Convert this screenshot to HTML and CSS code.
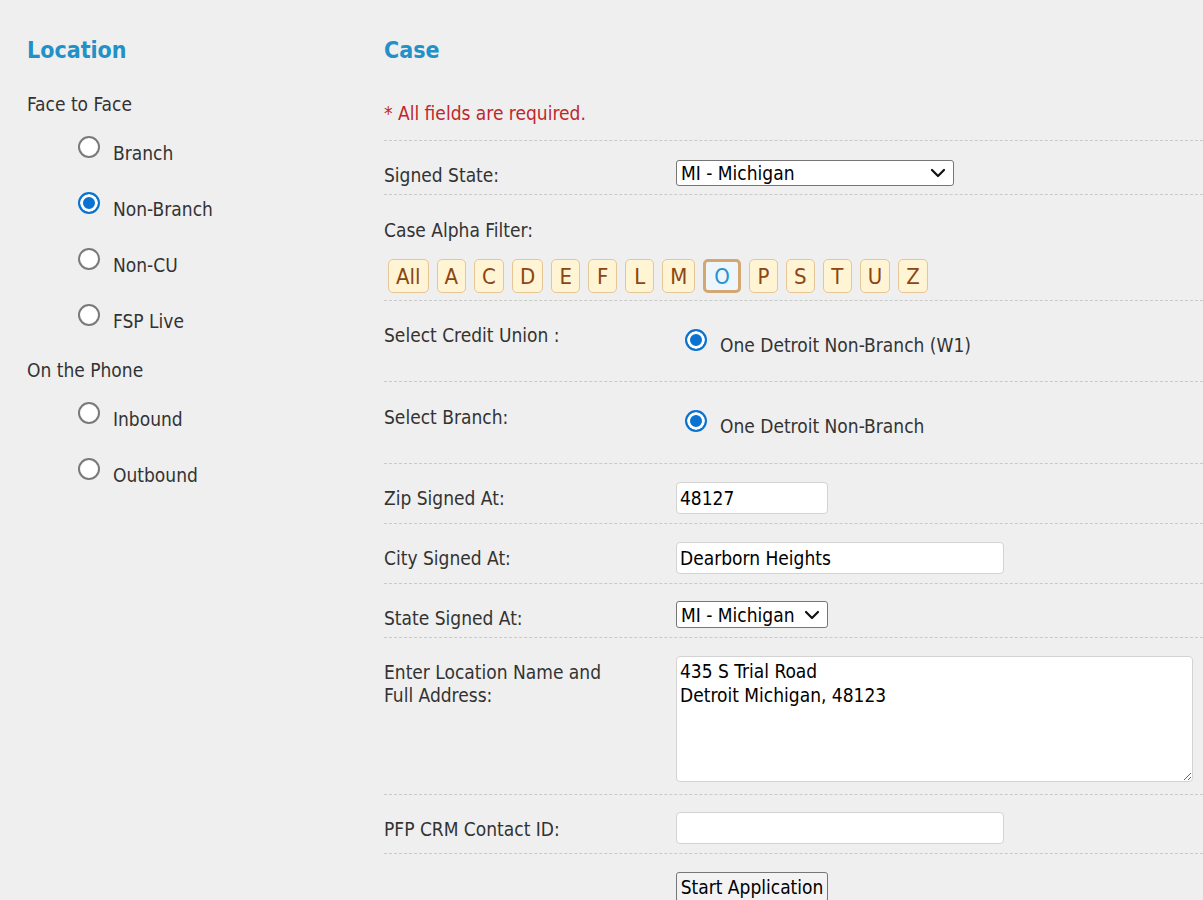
FILE: index.html
```html
<!DOCTYPE html>
<html lang="en">
<head>
<meta charset="utf-8">
<title>Location / Case</title>
<link rel="stylesheet" href="styles.css">
</head>
<body>
<div class="page">
  <section class="loc">
    <h2 class="heading">Location</h2>
    <div class="group">Face to Face</div>
    <label class="opt"><input type="radio" name="loc" class="radio"><span>Branch</span></label>
    <label class="opt"><input type="radio" name="loc" class="radio" checked><span>Non-Branch</span></label>
    <label class="opt"><input type="radio" name="loc" class="radio"><span>Non-CU</span></label>
    <label class="opt"><input type="radio" name="loc" class="radio"><span>FSP Live</span></label>
    <div class="group group-2">On the Phone</div>
    <label class="opt"><input type="radio" name="loc" class="radio"><span>Inbound</span></label>
    <label class="opt"><input type="radio" name="loc" class="radio"><span>Outbound</span></label>
  </section>

  <section class="case">
    <h2 class="heading">Case</h2>
    <div class="row row-req"><span class="req">* All fields are required.</span></div>

    <div class="row row-signed">
      <div class="lbl">Signed State:</div>
      <div class="ctl">
        <div class="selwrap sel-wide">
          <select class="sel"><option>MI - Michigan</option></select>
          <svg class="chev" width="16" height="10" viewBox="0 0 16 10"><path d="M2 2 L8 8 L14 2" fill="none" stroke="#111" stroke-width="2.2" stroke-linecap="round" stroke-linejoin="round"/></svg>
        </div>
      </div>
    </div>

    <div class="row row-alpha">
      <div class="lbl">Case Alpha Filter:</div>
      <div class="alpha">
        <button class="ab">All</button>
        <button class="ab">A</button>
        <button class="ab">C</button>
        <button class="ab">D</button>
        <button class="ab">E</button>
        <button class="ab">F</button>
        <button class="ab">L</button>
        <button class="ab">M</button>
        <button class="ab ab-on">O</button>
        <button class="ab">P</button>
        <button class="ab">S</button>
        <button class="ab">T</button>
        <button class="ab">U</button>
        <button class="ab">Z</button>
      </div>
    </div>

    <div class="row row-cu">
      <div class="lbl">Select Credit Union :</div>
      <div class="ctl ctl-radio"><label class="ropt"><input type="radio" name="cu" class="radio" checked><span>One Detroit Non-Branch (W1)</span></label></div>
    </div>

    <div class="row row-br">
      <div class="lbl">Select Branch:</div>
      <div class="ctl ctl-radio"><label class="ropt"><input type="radio" name="br" class="radio" checked><span>One Detroit Non-Branch</span></label></div>
    </div>

    <div class="row row-zip">
      <div class="lbl">Zip Signed At:</div>
      <div class="ctl"><input type="text" class="txt txt-zip" value="48127"></div>
    </div>

    <div class="row row-city">
      <div class="lbl">City Signed At:</div>
      <div class="ctl"><input type="text" class="txt txt-city" value="Dearborn Heights"></div>
    </div>

    <div class="row row-state">
      <div class="lbl">State Signed At:</div>
      <div class="ctl">
        <div class="selwrap sel-short">
          <select class="sel"><option>MI - Michigan</option></select>
          <svg class="chev" width="16" height="10" viewBox="0 0 16 10"><path d="M2 2 L8 8 L14 2" fill="none" stroke="#111" stroke-width="2.2" stroke-linecap="round" stroke-linejoin="round"/></svg>
        </div>
      </div>
    </div>

    <div class="row row-addr">
      <div class="lbl">Enter Location Name and<br>Full Address:</div>
      <div class="ctl"><textarea class="area">435 S Trial Road
Detroit Michigan, 48123</textarea></div>
    </div>

    <div class="row row-pfp">
      <div class="lbl">PFP CRM Contact ID:</div>
      <div class="ctl"><input type="text" class="txt txt-city" value=""></div>
    </div>

    <div class="row-btn">
      <button class="start">Start Application</button>
    </div>
  </section>
</div>
</body>
</html>
```

FILE: styles.css
```css
* { box-sizing: border-box; }

html, body {
  margin: 0;
  padding: 0;
  background: #efefef;
}

body {
  font-family: "DejaVu Sans Condensed", "DejaVu Sans", "Liberation Sans", sans-serif;
  font-size: 19px;
  color: #333;
  overflow: hidden;
}

.page {
  display: flex;
  align-items: flex-start;
}

.heading {
  margin: 37px 0 0;
  font-size: 23px;
  line-height: 26px;
  font-weight: bold;
  color: #2191c8;
}

/* left column */
.loc {
  width: 384px;
  padding-left: 27px;
  flex: none;
}

.group {
  margin-top: 30px;
  line-height: 22px;
}

.group-2 {
  margin-top: 20px;
}

.opt {
  display: flex;
  align-items: flex-start;
  padding: 27px 0 7px 51px;
  line-height: 22px;
}

.opt span { margin-left: 13px; }

.radio {
  appearance: none;
  -webkit-appearance: none;
  margin: -6px 0 0;
  width: 22px;
  height: 22px;
  border: 2px solid #7a7a7a;
  border-radius: 50%;
  background: #fff;
  flex: none;
}

.radio:checked {
  border-color: #0a72d1;
  background: #0a72d1;
  box-shadow: inset 0 0 0 3px #fff;
}

/* right column */
.case {
  flex: 1;
  min-width: 0;
}

.row {
  display: flex;
  align-items: flex-start;
  border-bottom: 1px dashed #c9c9c9;
}

.lbl {
  width: 292px;
  flex: none;
  line-height: 22px;
  padding-top: 23px;
}

.ctl { flex: 1; }

.row-req {
  height: 78px;
  padding-top: 39px;
  line-height: 22px;
}

.req { color: #c0272d; }

.row-signed { height: 54px; }
.row-signed .ctl { padding-top: 19px; }

.selwrap {
  position: relative;
}

.sel {
  appearance: none;
  -webkit-appearance: none;
  display: block;
  width: 100%;
  height: 100%;
  font-family: "DejaVu Sans Condensed", "DejaVu Sans", sans-serif;
  font-size: 19px;
  color: #000;
  background: #fff;
  border: 1px solid #767676;
  border-radius: 3px;
  padding: 0 4px;
}

.chev {
  position: absolute;
  right: 8px;
  top: 50%;
  margin-top: -5px;
  pointer-events: none;
}

.sel-wide { width: 278px; height: 26px; }
.sel-short { width: 152px; height: 27px; }

.row-alpha {
  height: 106px;
  flex-direction: column;
}

.row-alpha .lbl { padding-top: 24px; }

.alpha {
  display: flex;
  gap: 8px;
  margin-top: 18px;
  padding-left: 4px;
}

.ab {
  font-family: "DejaVu Sans Condensed", "DejaVu Sans", sans-serif;
  font-size: 22px;
  height: 34px;
  padding: 0 7px;
  min-width: 29px;
  color: #8d4511;
  background: #fff4d4;
  border: 1.5px solid #e6c597;
  border-radius: 5px;
}

.ab-on {
  color: #2a90d0;
  background: #eef6fd;
  border: 3px solid #d4a672;
  padding: 0 8px;
}

.row-cu { height: 81px; }
.row-br { height: 82px; }
.row-br .lbl { padding-top: 24px; }

.ctl-radio { padding-top: 33px; }

.ropt {
  display: flex;
  align-items: flex-start;
  line-height: 22px;
  padding-left: 9px;
}

.ropt .radio { margin-top: -5px; }
.ropt span { margin-left: 13px; }

.txt {
  display: block;
  font-family: "DejaVu Sans Condensed", "DejaVu Sans", sans-serif;
  font-size: 19px;
  color: #000;
  background: #fff;
  border: 1px solid #d3d3d3;
  border-radius: 4px;
  padding: 0 3px;
  height: 32px;
}

.txt-zip { width: 152px; }
.txt-city { width: 328px; }

.row-zip { height: 60px; }
.row-zip .ctl { padding-top: 18px; }

.row-city { height: 60px; }
.row-city .ctl { padding-top: 18px; }

.row-state { height: 54px; }
.row-state .ctl { padding-top: 17px; }

.row-addr { height: 157px; }
.row-addr .lbl { line-height: 23px; }
.row-addr .ctl { padding-top: 18px; }

.area {
  display: block;
  width: 517px;
  height: 126px;
  font-family: "DejaVu Sans Condensed", "DejaVu Sans", sans-serif;
  font-size: 19px;
  line-height: 24px;
  color: #000;
  background: #fff;
  border: 1px solid #d3d3d3;
  border-radius: 4px;
  padding: 2px 3px;
  resize: vertical;
}

.row-pfp { height: 59px; }
.row-pfp .ctl { padding-top: 17px; }

.row-btn {
  padding: 18px 0 0 292px;
}

.start {
  font-family: "DejaVu Sans Condensed", "DejaVu Sans", sans-serif;
  font-size: 19px;
  color: #000;
  background: #f3f3f3;
  border: 1px solid #767676;
  border-radius: 3px;
  width: 152px;
  height: 30px;
  padding: 0 2px;
}
```
